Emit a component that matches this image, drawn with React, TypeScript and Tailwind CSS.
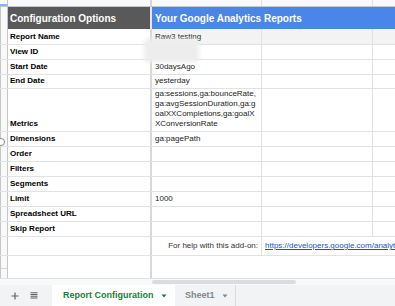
import React from "react";

type Row = {
  label: string;
  value?: React.ReactNode;
  h: string;
  shaded?: boolean;
};

const rows: Row[] = [
  { label: "Report Name", value: "Raw3 testing", h: "h-[16px]", shaded: true },
  { label: "View ID", h: "h-[15px]" },
  { label: "Start Date", value: "30daysAgo", h: "h-[15px]" },
  { label: "End Date", value: "yesterday", h: "h-[14px]" },
  {
    label: "Metrics",
    h: "h-[43px]",
    value: (
      <>
        <span className="block">ga:sessions,ga:bounceRate,</span>
        <span className="block">ga:avgSessionDuration,ga:g</span>
        <span className="block">oalXXCompletions,ga:goalX</span>
        <span className="block">XConversionRate</span>
      </>
    ),
  },
  { label: "Dimensions", value: "ga:pagePath", h: "h-[15px]" },
  { label: "Order", h: "h-[15px]" },
  { label: "Filters", h: "h-[15px]" },
  { label: "Segments", h: "h-[15px]" },
  { label: "Limit", value: "1000", h: "h-[15px]" },
  { label: "Spreadsheet URL", h: "h-[15px]" },
  { label: "Skip Report", h: "h-[15px]" },
];

function RowHeader({ className }: { className?: string }) {
  return <div className={"w-[8px] shrink-0 border-l border-r border-[#c6c6c6] bg-[#f8f9fa] " + (className ?? "")} />;
}

function Divider() {
  return <div className="w-[2px] shrink-0 bg-[#d6d8db]" />;
}

function SheetRow({ row }: { row: Row }) {
  return (
    <div className={"flex border-b border-[#e2e2e2] " + row.h}>
      <RowHeader />
      <div className="flex w-[142px] shrink-0 items-end pb-[2px] pl-[2px] text-[8px] font-bold leading-[10px] text-black">
        {row.label}
      </div>
      <Divider />
      <div
        className={
          "flex w-[110px] shrink-0 items-end border-r border-[#e2e2e2] pb-[2px] pl-[3px] text-[8px] leading-[10px] text-[#222]" +
          (row.shaded ? " bg-[#f3f3f3]" : "")
        }
      >
        <div>{row.value}</div>
      </div>
      <div className={"w-[111px] shrink-0 border-r border-[#e2e2e2]" + (row.shaded ? " bg-[#f3f3f3]" : "")} />
      <div className={"flex-1" + (row.shaded ? " bg-[#f3f3f3]" : "")} />
    </div>
  );
}

function Caret({ color }: { color: string }) {
  return (
    <svg width="6" height="4" viewBox="0 0 6 4" className="ml-[7px]">
      <path d="M0.5 0.5 L5.5 0.5 L3 3.5 Z" fill={color} />
    </svg>
  );
}

export default function App() {
  return (
    <div className="relative h-[306px] w-[395px] overflow-hidden bg-white font-['Liberation_Sans',Arial,sans-serif]">
      {/* column header strip */}
      <div className="flex h-[7px] border-b border-[#c4c7c5] bg-[#f8f9fa]">
        <div className="w-[8px] shrink-0 border-r border-[#c6c6c6] border-b-2 border-b-[#8ab4f8]" />
        <div className="w-[142px] shrink-0" />
        <Divider />
        <div className="w-[110px] shrink-0 border-r border-[#e0e0e0]" />
        <div className="w-[111px] shrink-0 border-r border-[#e0e0e0]" />
        <div className="flex-1" />
      </div>

      {/* title row */}
      <div className="flex h-[22px]">
        <RowHeader />
        <div className="flex w-[142px] shrink-0 items-center bg-[#595959] pl-[2px] text-[10px] font-bold text-white">
          Configuration Options
        </div>
        <div className="w-[2px] shrink-0 bg-[#e6e6e6]" />
        <div className="flex flex-1 items-center bg-[#4a86e8] pl-[3px] text-[10px] font-bold text-white">
          Your Google Analytics Reports
        </div>
      </div>

      {rows.map((r) => (
        <SheetRow key={r.label} row={r} />
      ))}

      {/* help row */}
      <div className="flex h-[19px] border-b border-[#e2e2e2]">
        <RowHeader />
        <div className="w-[142px] shrink-0" />
        <Divider />
        <div className="flex w-[110px] shrink-0 items-center justify-end border-r border-[#e2e2e2] pr-[3px] text-[8px] text-[#333]">
          For help with this add-on:
        </div>
        <div className="flex flex-1 items-center overflow-hidden whitespace-nowrap pl-[3px] text-[8px] text-[#1155cc] underline">
          https://developers.google.com/analytics/devguides/reporting
        </div>
      </div>

      {/* trailing space */}
      <div className="flex h-[22px]">
        <div className="w-[8px] shrink-0 border-l border-r border-[#c6c6c6] bg-[#f8f9fa]">
          <div className="mt-[12px] border-b border-[#d6d6d6]" />
        </div>
        <div className="w-[142px] shrink-0" />
        <Divider />
        <div className="flex-1" />
      </div>

      {/* horizontal scrollbar */}
      <div className="flex h-[7px] border-t border-[#e0e0e0] bg-[#f8f9fa]">
        <div className="w-[152px] shrink-0" />
        <div className="mt-[1px] h-[4px] w-[144px] rounded-full bg-[#dadce0]" />
      </div>

      {/* sheet tabs */}
      <div className="flex h-[21px] items-stretch bg-[#f1f3f4]">
        <div className="flex w-[52px] shrink-0 items-center pl-[11px] text-[#5f6368]">
          <svg width="8" height="8" viewBox="0 0 8 8">
            <path d="M4 0.5 V7.5 M0.5 4 H7.5" stroke="#5f6368" strokeWidth="1.2" />
          </svg>
          <svg width="8" height="7" viewBox="0 0 8 7" className="ml-[11px]">
            <path d="M0.5 0.75 H7.5 M0.5 2.5 H7.5 M0.5 4.25 H7.5 M0.5 6 H7.5" stroke="#5f6368" strokeWidth="1" />
          </svg>
        </div>
        <div className="flex w-[123px] shrink-0 items-center bg-white pl-[11px] text-[9px] font-bold text-[#188038]">
          Report Configuration
          <Caret color="#188038" />
        </div>
        <div className="flex w-[61px] shrink-0 items-center border-r border-[#dadce0] pl-[10px] text-[9px] font-bold text-[#80868b]">
          Sheet1
          <Caret color="#80868b" />
        </div>
        <div className="flex-1" />
      </div>

      {/* overlays */}
      <div className="absolute left-[144px] top-[39px] h-[23px] w-[55px] rounded-[3px] bg-[#ededed] blur-[2px]" />
      <div className="absolute left-[-3px] top-[138px] h-[8px] w-[8px] rounded-full border border-[#8a8a8a] bg-white" />
    </div>
  );
}
